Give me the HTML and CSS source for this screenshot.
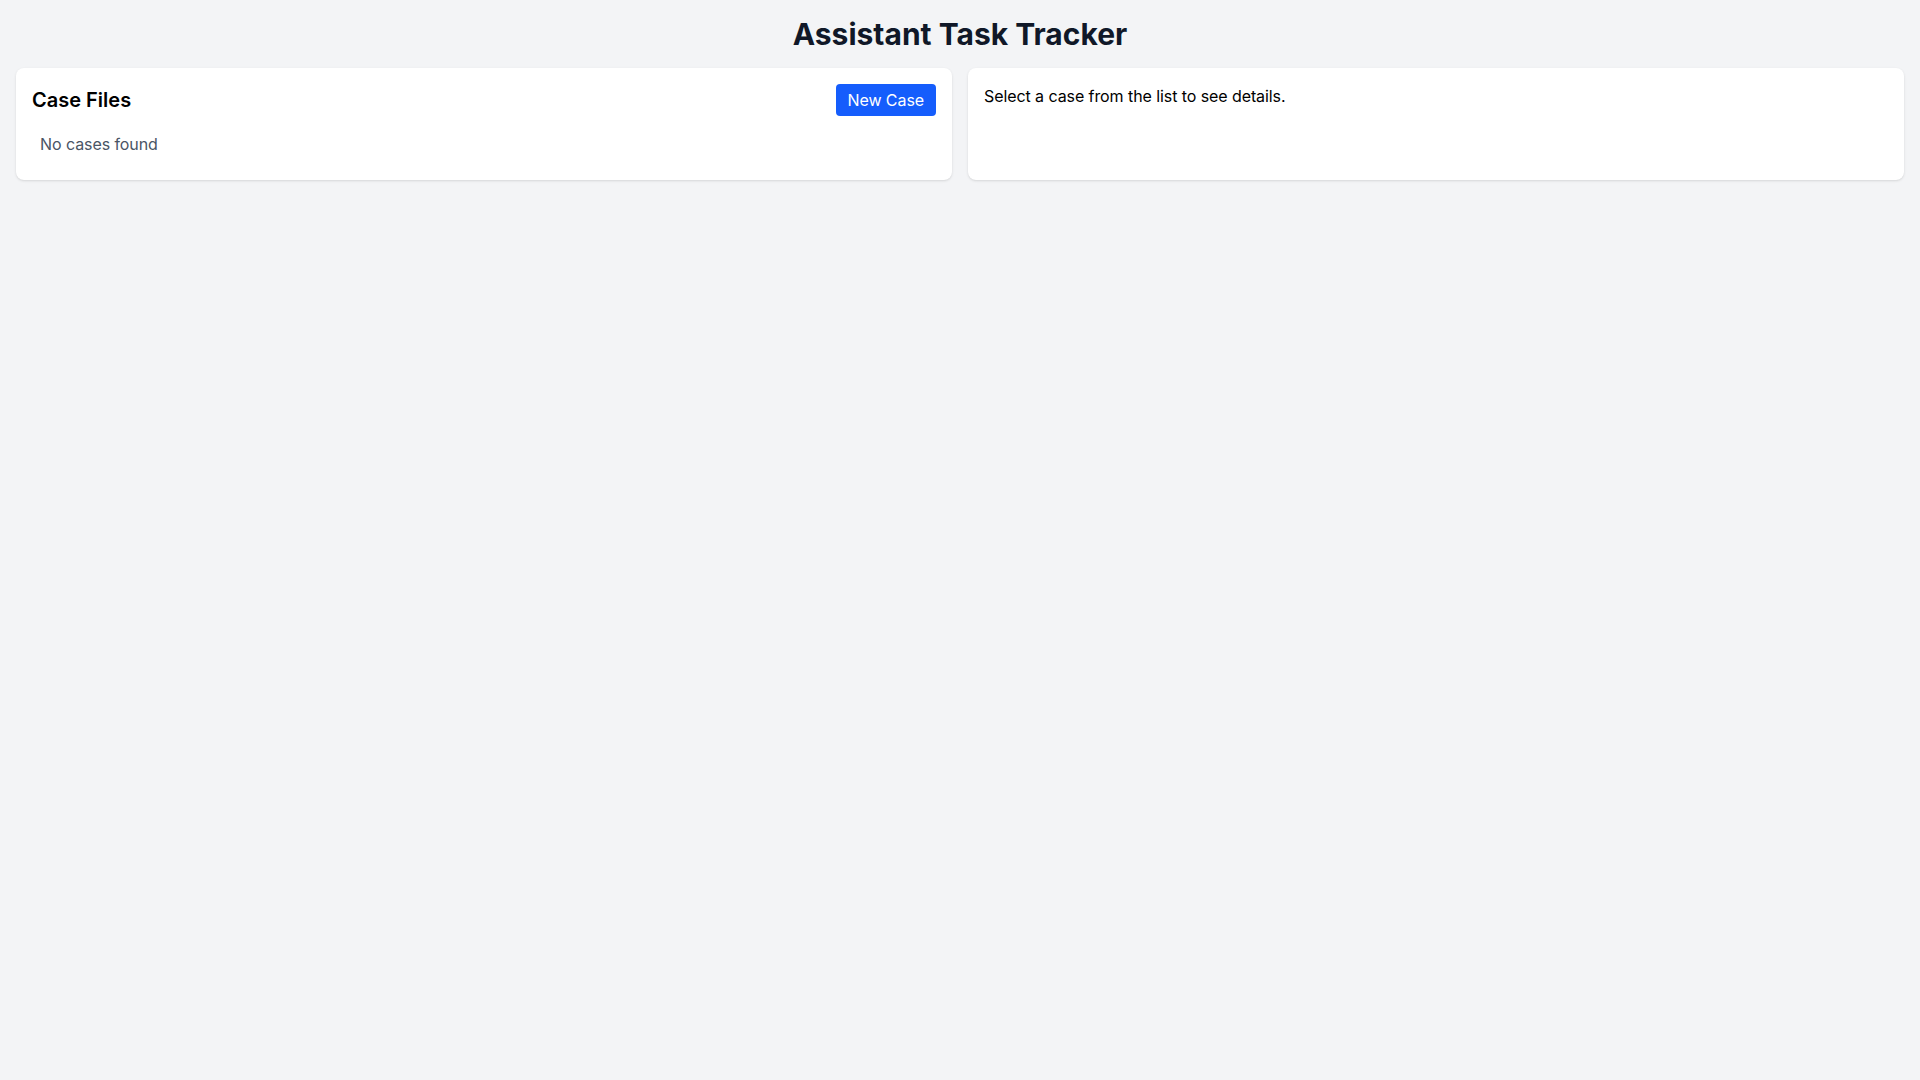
FILE: index.html
```html
<!DOCTYPE html>
<html lang="en">
<head>
<meta charset="utf-8">
<title>Assistant Task Tracker</title>
<link rel="stylesheet" href="styles.css">
</head>
<body>
<div class="app">
  <h1 class="title">Assistant Task Tracker</h1>
  <div class="columns">
    <section class="card">
      <div class="card-header">
        <h2 class="card-title">Case Files</h2>
        <button class="btn-primary">New Case</button>
      </div>
      <ul class="case-list">
        <li class="case-empty">No cases found</li>
      </ul>
    </section>
    <section class="card">
      <p class="placeholder">Select a case from the list to see details.</p>
    </section>
  </div>
</div>
</body>
</html>
```
FILE: styles.css
```css
* { box-sizing: border-box; }
html, body { margin: 0; padding: 0; }
body {
  background: #f3f4f6;
  font-family: Inter, "Noto Sans", sans-serif;
  font-size: 16px;
  line-height: 24px;
  color: #000;
  min-height: 100vh;
}
.app { padding: 16px; }
.title {
  margin: 0 0 16px;
  text-align: center;
  font-size: 30px;
  line-height: 36px;
  font-weight: 700;
  color: #101828;
}
.columns {
  display: grid;
  grid-template-columns: 1fr 1fr;
  gap: 16px;
}
.card {
  background: #fff;
  border-radius: 8px;
  padding: 16px;
  box-shadow: 0 1px 3px 0 rgba(0,0,0,0.1), 0 1px 2px -1px rgba(0,0,0,0.1);
}
.card-header {
  display: flex;
  justify-content: space-between;
  align-items: center;
  margin-bottom: 8px;
}
.card-title {
  margin: 0;
  font-size: 20px;
  line-height: 28px;
  font-weight: 600;
}
.btn-primary {
  background: #155dfc;
  color: #fff;
  border: none;
  border-radius: 4px;
  padding: 4px 12px;
  font-family: inherit;
  font-size: 16px;
  line-height: 24px;
  letter-spacing: -0.08px;
  cursor: pointer;
}
.case-list { list-style: none; margin: 0; padding: 0; }
.case-empty { padding: 8px; color: #4a5565; letter-spacing: -0.08px; }
.placeholder { margin: 0; letter-spacing: -0.08px; }
```
